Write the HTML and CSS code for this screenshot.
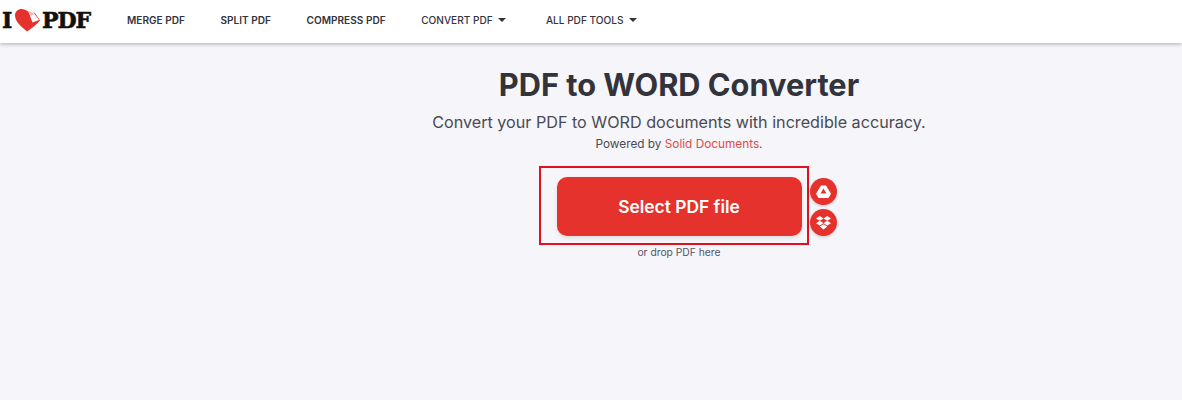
FILE: index.html
```html
<!DOCTYPE html>
<html lang="en">
<head>
<meta charset="utf-8">
<title>PDF to WORD Converter</title>
<link rel="stylesheet" href="styles.css">
</head>
<body>
<header class="topbar">
  <a class="logo" href="#">
    <span class="logo-i">I</span>
    <svg class="logo-heart" width="27" height="24" viewBox="0 0 27 24">
      <path d="M13 23.500 C8 19 1 14 1 7.500 C1 3.500 4 1 7.500 1 C10 1 12.500 2 14 3.500 L21 5 L26 12.500 C22 17 18 20 13 23.500 Z" fill="#e5322d"/>
      <path d="M14 2.500 L19.500 4.500 L25 12 L18.500 14.500 Z" fill="#fff"/>
      <path d="M14 2.500 L16.500 8 L20.500 6 Z" fill="#f2b8b5"/>
    </svg>
    <span class="logo-pdf">PDF</span>
  </a>
  <nav class="nav">
    <a class="nav-link" href="#">MERGE PDF</a>
    <a class="nav-link" href="#">SPLIT PDF</a>
    <a class="nav-link" href="#">COMPRESS PDF</a>
    <a class="nav-link nav-drop" href="#">CONVERT PDF <span class="caret"></span></a>
    <a class="nav-link nav-drop" href="#">ALL PDF TOOLS <span class="caret"></span></a>
  </nav>
</header>
<main class="main">
  <h1 class="title">PDF to WORD Converter</h1>
  <p class="lead">Convert your PDF to WORD documents with incredible accuracy.</p>
  <p class="powered">Powered by <a class="powered-link" href="#">Solid Documents</a>.</p>
  <div class="uploader">
    <button class="select-btn" type="button">Select PDF file</button>
    <span class="highlight"></span>
    <div class="cloud">
      <a class="cloud-btn" href="#" aria-label="Google Drive">
        <svg width="15" height="13" viewBox="0 0 15 13"><path fill="#fff" d="M5 0.500 H10 L15 8.800 L12.500 13 H2.500 L0 8.800 Z M7.500 3.600 L4.600 8.600 H10.400 Z"/></svg>
      </a>
      <a class="cloud-btn" href="#" aria-label="Dropbox">
        <svg width="15" height="14" viewBox="0 0 15 14"><path fill="#fff" d="M3.800 0 L7.500 2.400 L3.800 4.800 L0 2.400 Z M11.200 0 L15 2.400 L11.200 4.800 L7.500 2.400 Z M0 7.200 L3.800 4.800 L7.500 7.200 L3.800 9.600 Z M15 7.200 L11.200 9.600 L7.500 7.200 L11.200 4.800 Z M3.800 10.600 L7.500 8.200 L11.200 10.600 L7.500 13.400 Z"/></svg>
      </a>
    </div>
  </div>
  <p class="drop">or drop PDF here</p>
</main>
</body>
</html>
```
FILE: styles.css
```css
* { box-sizing: border-box; }
html, body { margin: 0; height: 100%; }
body {
  background: #f5f5fa;
  font-family: Inter, "Noto Sans", sans-serif;
  color: #33333b;
  overflow: hidden;
}
a { text-decoration: none; color: inherit; }

.topbar {
  display: flex;
  align-items: center;
  height: 43px;
  background: #fff;
  box-shadow: 0 1px 4px rgba(0, 0, 0, .3);
  padding-left: 2px;
}
.logo {
  display: flex;
  align-items: center;
  width: 90px;
  height: 43px;
  font-family: "DejaVu Serif", serif;
  font-weight: 700;
  font-size: 22px;
  color: #111;
  -webkit-text-stroke: .6px #111;
  padding-bottom: 3px;
}
.logo-i { width: 11px; }
.logo-heart { margin-left: 1px; flex: none; }
.logo-pdf { margin-left: 1px; letter-spacing: -1px; }

.nav { display: flex; margin-left: 35px; gap: 35.500px; padding-bottom: 3px; }
.nav-link {
  font-size: 10.100px;
  font-weight: 600;
  color: #33333b;
  white-space: nowrap;
}
.nav-drop { font-weight: 500; padding-right: 4px; }
.caret {
  display: inline-block;
  width: 0;
  height: 0;
  margin-left: 3px;
  border: 4px solid transparent;
  border-top: 4px solid #33333b;
  border-bottom: 0;
  vertical-align: 2px;
}

.main {
  display: flex;
  flex-direction: column;
  align-items: center;
  padding: 23px 0 0 176px;
}
.title {
  margin: 0;
  font-size: 30.750px;
  line-height: 38px;
  font-weight: 700;
  color: #33333b;
  white-space: nowrap;
}
.lead {
  margin: 7px 0 0;
  font-size: 16.150px;
  line-height: 22px;
  font-weight: 400;
  color: #4a4a52;
  white-space: nowrap;
}
.powered {
  margin: 3px 0 0;
  font-size: 11.800px;
  line-height: 16px;
  color: #4a4a52;
}
.powered-link { color: #dd4a46; }

.uploader {
  position: relative;
  margin-top: 25px;
}
.select-btn {
  display: block;
  width: 245px;
  height: 59px;
  border: 0;
  border-radius: 10px;
  background: #e5322d;
  color: #fff;
  font-family: inherit;
  font-size: 17.400px;
  font-weight: 600;
  box-shadow: 0 2px 4px rgba(0, 0, 0, .1);
}
.highlight {
  position: absolute;
  left: -18px;
  top: -11.500px;
  width: 270px;
  height: 79px;
  border: 2.500px solid #e0101f;
  pointer-events: none;
}
.cloud {
  position: absolute;
  left: 253px;
  top: 1px;
  display: flex;
  flex-direction: column;
  gap: 4px;
}
.cloud-btn {
  display: flex;
  align-items: center;
  justify-content: center;
  width: 27px;
  height: 27px;
  border-radius: 50%;
  background: #e5322d;
  box-shadow: 0 1px 3px rgba(0, 0, 0, .2);
}
.drop {
  margin: 9px 0 0;
  font-size: 10.300px;
  line-height: 14px;
  color: #55555d;
}
```
